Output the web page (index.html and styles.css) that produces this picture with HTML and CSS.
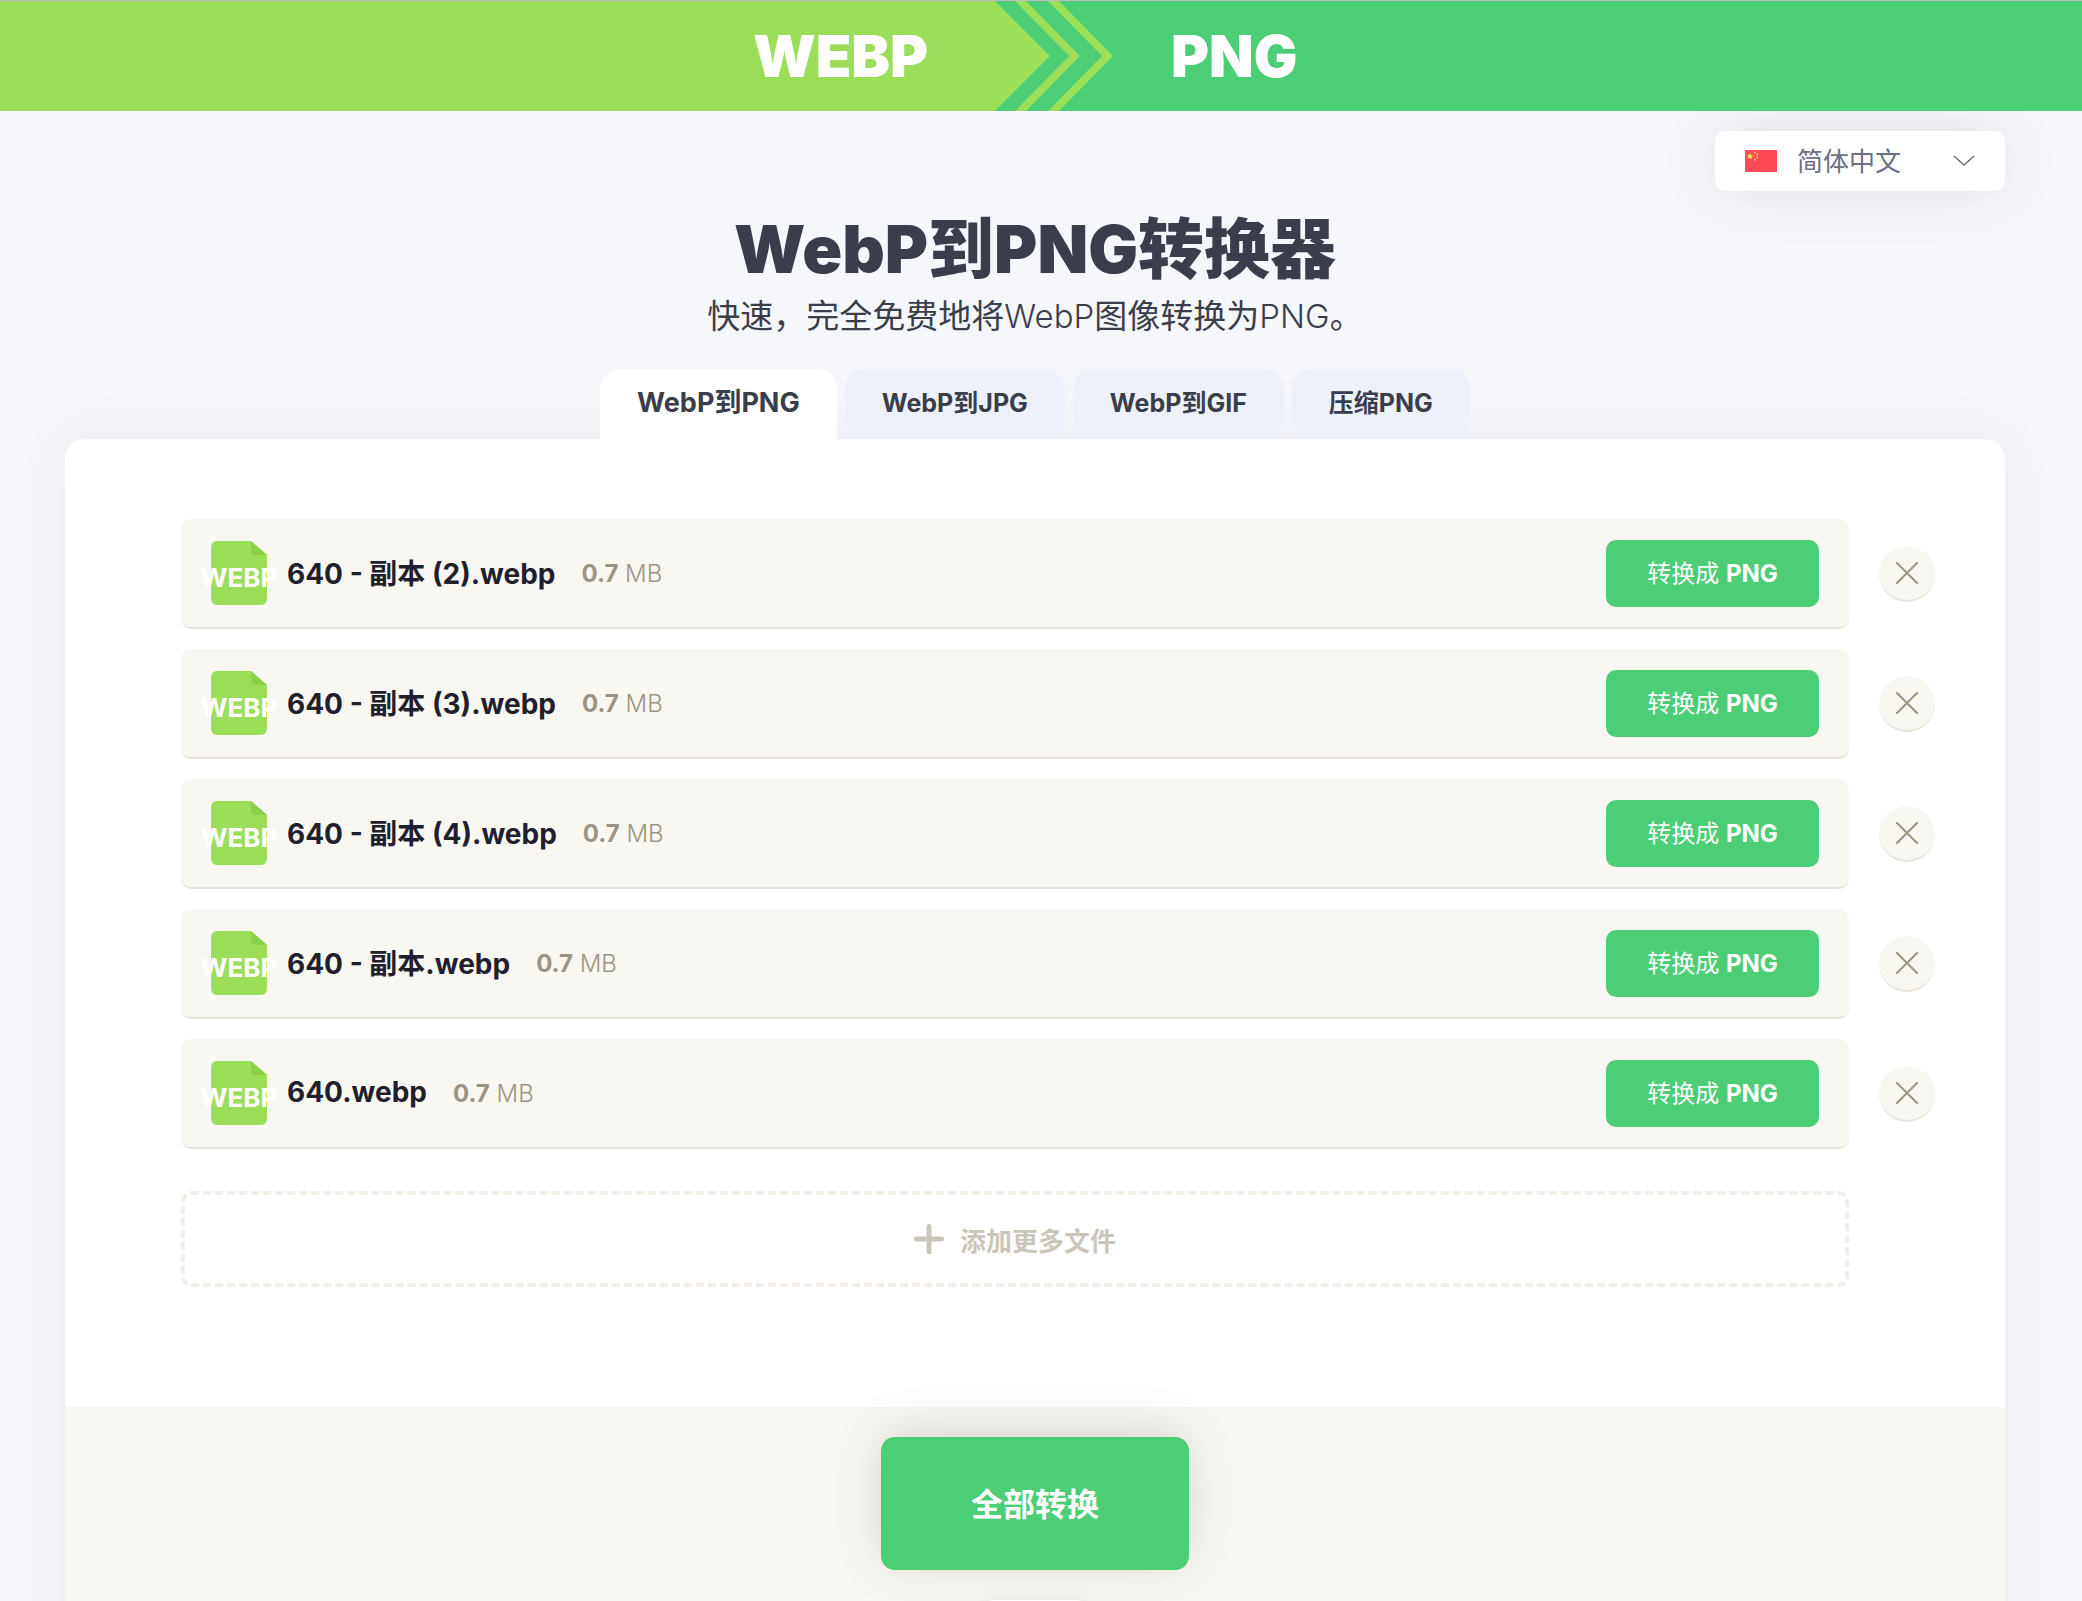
FILE: index.html
```html
<!DOCTYPE html>
<html lang="zh-CN">
<head>
<meta charset="utf-8">
<meta name="viewport" content="width=device-width, initial-scale=1">
<title>WebP到PNG转换器</title>
<link rel="stylesheet" href="styles.css">
</head>
<body>
<svg class="sprite" aria-hidden="true">
  <symbol id="file" viewBox="0 0 56 64"><path fill="#9bde5a" d="M6 0h34l16 14v44a6 6 0 0 1-6 6H6a6 6 0 0 1-6-6V6a6 6 0 0 1 6-6z"/><path fill="#8bd147" d="M40 0l16 14H44a4 4 0 0 1-4-4z"/></symbol>
  <symbol id="close" viewBox="0 0 22 22"><path d="M1 1l20 20M21 1L1 21" fill="none" stroke="#9b9580" stroke-width="2" stroke-linecap="round"/></symbol>
</svg>
<header class="banner">
  <div class="banner-from"><span>WEBP</span></div>
  <svg class="banner-arrows" viewBox="0 0 120 110" aria-hidden="true"><path fill="#9bde5a" d="M0 0l55 55-55 55zM20 0h11l54 55-54 55H20l54-55zM53 0h11l54 55-54 55H53l54-55z"/></svg>
  <div class="banner-to"><span>PNG</span></div>
</header>
<main class="page">
  <div class="language">
    <svg class="flag" viewBox="0 0 32 22" aria-hidden="true"><path fill="#ff4b55" d="M0 0h32v22H0z"/><path fill="#ffe15a" d="M5 3l1 2.300h2.400L6.500 6.800l.7 2.400L5 7.700 2.800 9.200l.7-2.400L1.600 5.300H4z"/><g fill="#ffe15a"><circle cx="10" cy="2.500" r=".9"/><circle cx="12.300" cy="4.500" r=".9"/><circle cx="12.300" cy="7.500" r=".9"/><circle cx="10" cy="9.800" r=".9"/></g></svg>
    <select class="language-select" aria-label="语言"><option>简体中文</option></select>
    <svg class="caret" viewBox="0 0 22 12" aria-hidden="true"><path d="M1 1l10 9L21 1" fill="none" stroke="#6c7080" stroke-width="1.500"/></svg>
  </div>
  <h1 class="title">WebP到PNG转换器</h1>
  <p class="subtitle">快速，完全免费地将<span class="light">WebP</span>图像转换为<span class="light">PNG</span>。</p>
  <nav class="tabs">
    <a class="tab tab-active" href="#">WebP到PNG</a>
    <a class="tab" href="#">WebP到JPG</a>
    <a class="tab" href="#">WebP到GIF</a>
    <a class="tab" href="#">压缩PNG</a>
  </nav>
  <section class="card">
    <div class="files">
      <ul class="file-list">
        <li class="file"><div class="file-bar"><span class="file-icon"><svg aria-hidden="true"><use href="#file"/></svg><span>WEBP</span></span><span class="file-name">640 - 副本 (2).webp</span><span class="file-size"><b>0.7</b> MB</span><button class="convert" type="button">转换成 <b>PNG</b></button></div><button class="remove" type="button" aria-label="删除"><svg aria-hidden="true"><use href="#close"/></svg></button></li>
        <li class="file"><div class="file-bar"><span class="file-icon"><svg aria-hidden="true"><use href="#file"/></svg><span>WEBP</span></span><span class="file-name">640 - 副本 (3).webp</span><span class="file-size"><b>0.7</b> MB</span><button class="convert" type="button">转换成 <b>PNG</b></button></div><button class="remove" type="button" aria-label="删除"><svg aria-hidden="true"><use href="#close"/></svg></button></li>
        <li class="file"><div class="file-bar"><span class="file-icon"><svg aria-hidden="true"><use href="#file"/></svg><span>WEBP</span></span><span class="file-name">640 - 副本 (4).webp</span><span class="file-size"><b>0.7</b> MB</span><button class="convert" type="button">转换成 <b>PNG</b></button></div><button class="remove" type="button" aria-label="删除"><svg aria-hidden="true"><use href="#close"/></svg></button></li>
        <li class="file"><div class="file-bar"><span class="file-icon"><svg aria-hidden="true"><use href="#file"/></svg><span>WEBP</span></span><span class="file-name">640 - 副本.webp</span><span class="file-size"><b>0.7</b> MB</span><button class="convert" type="button">转换成 <b>PNG</b></button></div><button class="remove" type="button" aria-label="删除"><svg aria-hidden="true"><use href="#close"/></svg></button></li>
        <li class="file"><div class="file-bar"><span class="file-icon"><svg aria-hidden="true"><use href="#file"/></svg><span>WEBP</span></span><span class="file-name">640.webp</span><span class="file-size"><b>0.7</b> MB</span><button class="convert" type="button">转换成 <b>PNG</b></button></div><button class="remove" type="button" aria-label="删除"><svg aria-hidden="true"><use href="#close"/></svg></button></li>
      </ul>
      <button class="add" type="button"><svg viewBox="0 0 30 30" aria-hidden="true"><path d="M15 2.500v25M2.500 15h25" stroke="#cbc6bb" stroke-width="5" stroke-linecap="round"/></svg>添加更多文件</button>
    </div>
    <div class="actions">
      <button class="convert-all" type="button">全部转换</button>
      <div class="chip"></div>
    </div>
  </section>
</main>
</body>
</html>
```
FILE: styles.css
```css
* { box-sizing: border-box; }

body {
  margin: 0;
  background: #f5f7fb;
  color: #3a3d4a;
  font-family: Inter, "Noto Sans CJK SC", sans-serif;
  overflow-x: hidden;
}

button, select { font: inherit; border: 0; cursor: pointer; }
b { font-weight: 700; }
.sprite { display: none; }

.banner {
  position: relative;
  z-index: 1;
  display: flex;
  height: 111px;
  border-top: 1px solid #b9bcb9;
  background: #4bce75;
  color: #fff;
  font-size: 58px;
  font-weight: 900;
  line-height: 110px;
}
.banner-from {
  width: calc(50% - 46px);
  padding-right: 67px;
  background: #9bde5a;
  text-align: right;
}
.banner-arrows { width: 120px; height: 110px; flex: none; }
.banner-to { flex: 1; padding-left: 56px; }

.page { padding: 20px 77px 0 65px; }

.language {
  display: flex;
  align-items: center;
  width: 290px;
  height: 60px;
  margin-left: auto;
  padding: 0 30px;
  border-radius: 10px;
  background: #fff;
  box-shadow: 0 0 60px rgba(0, 0, 0, .1);
}
.flag { width: 32px; height: 22px; }
.language-select {
  flex: 1;
  padding: 0 0 0 20px;
  appearance: none;
  background: none;
  color: #6c7080;
  font-size: 26px;
}
.caret { width: 22px; height: 12px; }

.title {
  margin: 18px 0 0;
  font-size: 66px;
  font-weight: 900;
  line-height: 80px;
  text-align: center;
}
.subtitle {
  margin: 3px 0 0;
  font-size: 33px;
  line-height: 48px;
  text-align: center;
}
.light { font-weight: 300; }

.tabs {
  display: flex;
  justify-content: center;
  gap: 8px;
  margin-top: 29px;
}
.tab {
  height: 70px;
  padding: 0 37px;
  border-radius: 20px 20px 0 0;
  background: #eef1f9;
  color: #3a3d4a;
  font-size: 25px;
  font-weight: 700;
  line-height: 68px;
  text-decoration: none;
}
.tab-active { position: relative; background: #fff; font-size: 27px; }

.card {
  border-radius: 20px 20px 0 0;
  background: #fff;
  box-shadow: 0 0 60px rgba(0, 0, 0, .06);
}

.files { padding: 80px 70px 120px 116px; }
.file-list {
  display: grid;
  gap: 20px;
  margin: 0;
  padding: 0;
  list-style: none;
}
.file { display: flex; align-items: center; gap: 30px; }
.file-bar {
  display: flex;
  flex: 1;
  align-items: center;
  height: 110px;
  padding: 0 30px;
  border-bottom: 2px solid #e8e2d9;
  border-radius: 10px;
  background: #f8f7f2;
}
.file-icon {
  display: grid;
  grid-template-columns: 56px;
  place-items: center;
  height: 64px;
  color: #fff;
  font-size: 26px;
  font-weight: 700;
}
.file-icon > * { grid-area: 1 / 1; }
.file-icon svg { width: 56px; height: 64px; }
.file-icon span { padding-top: 8px; }
.file-name {
  margin: 0 26px 0 20px;
  padding-bottom: 3px;
  color: #1f202b;
  font-size: 28px;
  font-weight: 700;
}
.file-size { color: #9b9485; font-size: 24px; font-weight: 300; }
.convert {
  width: 213px;
  height: 67px;
  margin-left: auto;
  padding: 0 0 4px;
  border-radius: 10px;
  background: #4bce75;
  color: #fff;
  font-size: 24px;
}
.remove {
  display: grid;
  place-items: center;
  width: 56px;
  height: 56px;
  padding: 0;
  border-bottom: 2px solid #e8e2d9;
  border-radius: 50%;
  background: #f8f7f2;
}
.remove svg { width: 22px; height: 22px; }

.add {
  display: flex;
  align-items: center;
  justify-content: center;
  gap: 16px;
  width: calc(100% - 86px);
  height: 96px;
  margin-top: 42px;
  padding: 0;
  border: 4px dashed #f3eee7;
  border-radius: 10px;
  background: none;
  color: #cbc6bb;
  font-size: 26px;
  font-weight: 700;
}
.add svg { width: 30px; height: 30px; }

.actions {
  display: flex;
  flex-direction: column;
  align-items: center;
  gap: 30px;
  padding-top: 30px;
  background: #f8f7f2;
}
.convert-all {
  width: 308px;
  height: 133px;
  padding: 0 0 4px;
  border-radius: 14px;
  background: #4bce75;
  box-shadow: 0 -6px 50px rgba(0, 0, 0, .14);
  color: #fff;
  font-size: 32px;
  font-weight: 700;
}
.chip {
  width: 110px;
  height: 60px;
  border-radius: 14px;
  background: #fff;
  box-shadow: 0 0 16px rgba(0, 0, 0, .08);
}
```
